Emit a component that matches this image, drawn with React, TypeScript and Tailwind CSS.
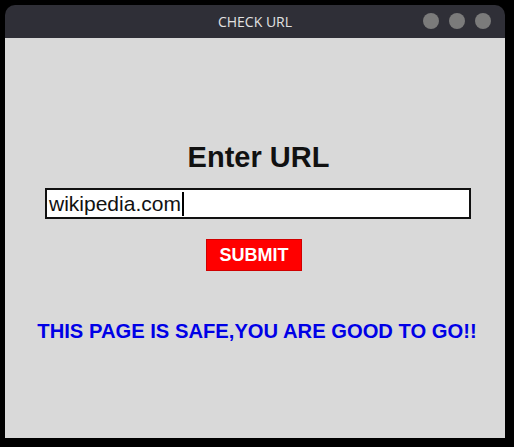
import React from "react";

const sans = "font-['Liberation_Sans',Arial,sans-serif]";

function TitleBar() {
  return (
    <div className="relative flex h-[33px] items-center justify-center rounded-t-[10px] bg-[#2f2f37]">
      <span className="font-['Open_Sans',sans-serif] text-[14px] text-[#e2e2e2]">
        CHECK URL
      </span>
      <div className="absolute right-[14px] top-[8px] flex gap-[10px]">
        <span className="h-[16px] w-[16px] rounded-full bg-[#7b7b7b]" />
        <span className="h-[16px] w-[16px] rounded-full bg-[#7b7b7b]" />
        <span className="h-[16px] w-[16px] rounded-full bg-[#7b7b7b]" />
      </div>
    </div>
  );
}

export default function App() {
  return (
    <div className="h-[447px] w-[514px] bg-black pl-[5px] pt-[5px]">
      <div className="flex h-[433px] w-[500px] flex-col">
        <TitleBar />
        <div className={`flex flex-1 flex-col bg-[#d9d9d9] pt-[105px] ${sans}`}>
          <h1 className="pl-[7px] text-center text-[29px] font-bold leading-[29px] text-[#111]">
            Enter URL
          </h1>
          <div className="ml-[40px] mt-[16px] flex h-[31px] w-[426px] items-center border-2 border-[#111] bg-white pl-[2px]">
            <span className="text-[21px] leading-[27px] text-[#111]">wikipedia.com</span>
            <span className="ml-[1px] inline-block h-[24px] w-[2px] bg-black" />
          </div>
          <div className="mt-[20px] flex justify-center pr-[2px]">
            <button className="h-[32px] w-[96px] border border-[#d00000] bg-[#ff0000] text-[18px] font-bold leading-[18px] text-white">
              SUBMIT
            </button>
          </div>
          <p className="mt-[50px] pl-[4px] text-center text-[20.2px] font-bold leading-[20px] text-[#0000e6]">
            THIS PAGE IS SAFE,YOU ARE GOOD TO GO!!
          </p>
        </div>
      </div>
    </div>
  );
}
